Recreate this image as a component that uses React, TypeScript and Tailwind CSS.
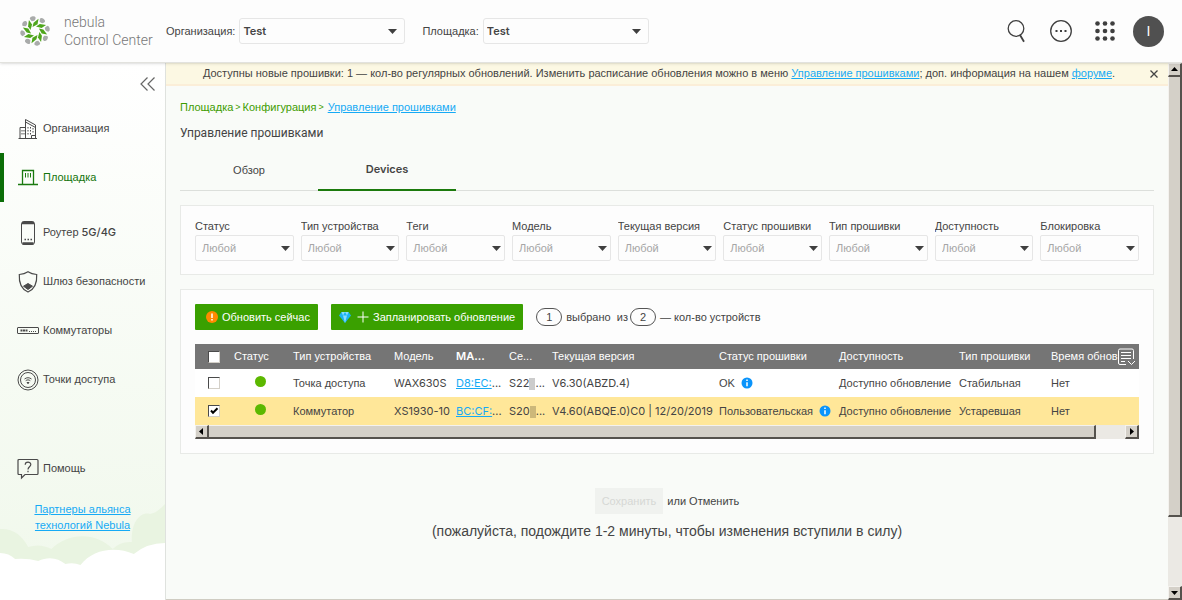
import { ReactNode, useState } from "react";

type FilterProps = {
  id: string;
  label: string;
};

type Device = {
  id: string;
  type: string;
  model: string;
  mac: string;
  serial: string;
  version: string;
  status: string;
  availability: string;
  firmware: string;
  time: string;
};

type NavItem = {
  label: ReactNode;
  icon: ReactNode;
  className: string;
};

const filters: FilterProps[] = [
  { id: "status", label: "Статус" },
  { id: "type", label: "Тип устройства" },
  { id: "tags", label: "Теги" },
  { id: "model", label: "Модель" },
  { id: "version", label: "Текущая версия" },
  { id: "fw-status", label: "Статус прошивки" },
  { id: "fw-type", label: "Тип прошивки" },
  { id: "availability", label: "Доступность" },
  { id: "lock", label: "Блокировка" },
];

const devices: Device[] = [
  {
    id: "wax",
    type: "Точка доступа",
    model: "WAX630S",
    mac: "D8:EC:",
    serial: "S22",
    version: "V6.30(ABZD.4)",
    status: "OK",
    availability: "Доступно обновление",
    firmware: "Стабильная",
    time: "Нет",
  },
  {
    id: "xs",
    type: "Коммутатор",
    model: "XS1930-10",
    mac: "BC:CF:",
    serial: "S20",
    version: "V4.60(ABQE.0)C0 | 12/20/2019",
    status: "Пользовательская",
    availability: "Доступно обновление",
    firmware: "Устаревшая",
    time: "Нет",
  },
];

function Logo() {
  return (
    <svg width="30" height="30" viewBox="-15 -15 30 30" aria-hidden="true">
      {[0, 45, 90, 135, 180, 225, 270, 315].map((a) => (
        <g key={a} transform={`rotate(${a + 8})`}>
          <path d="M-3 -3.500 L-2.600 -8 L1.800 -12.500 L1.600 -7 Z" fill="#4ea51b" />
          <path d="M3.300 -9.800 L3.200 -13 Q4.500 -14.500 7 -13.200 Q9 -12 8.600 -10.200 Q6.200 -7.600 3.300 -9.800 Z" fill="#a9abaa" />
        </g>
      ))}
    </svg>
  );
}

function OrgIcon() {
  return (
    <svg width="22" height="22" viewBox="0 0 22 22" fill="none" stroke="#4a4a4a" aria-hidden="true">
      <path d="M3 20.5V9.5H8.500M8.500 20.500V1.500L18.500 7V20.500ZM3 20.500H19M1.500 20.500H20" />
      <path d="M8.500 4L18.500 9.500" />
      <path d="M11 9V17M13.500 9V17M16 10V16M5 12V18M7 12V18" strokeDasharray="1.500 1.500" />
      <path d="M14.500 20.500V17.500H18.500" />
    </svg>
  );
}

function SiteIcon() {
  return (
    <svg width="22" height="22" viewBox="0 0 22 22" fill="none" stroke="#1a7a10" aria-hidden="true">
      <path d="M1 17.500H21M5.500 17.500V3.500H16.500V17.500" strokeWidth="1.300" />
      <path d="M8.500 6V10.500M11 6V10.500M13.500 6V10.500" />
    </svg>
  );
}

function RouterIcon() {
  return (
    <svg width="22" height="26" viewBox="0 0 22 26" fill="none" stroke="#4a4a4a" aria-hidden="true">
      <rect x="4.500" y="1.500" width="13" height="23" rx="2.500" />
      <path d="M5 3H17M5.500 23.500H16.500" strokeWidth="2.500" />
      <path d="M7.500 19.500H15" strokeWidth="1.500" strokeDasharray="1.500 1.500" />
    </svg>
  );
}

function ShieldIcon() {
  return (
    <svg width="22" height="22" viewBox="0 0 22 22" fill="none" stroke="#4a4a4a" aria-hidden="true">
      <path d="M11 0.800C13.500 2.500 16.500 3.300 19.700 3.500C20.200 12 18 18 11 21C4 18 1.800 12 2.300 3.500C5.500 3.300 8.500 2.500 11 0.800Z" strokeWidth="1.200" />
      <path d="M6.500 15.200L11 12.500L15.500 15.200L11 18.500Z" fill="#4a4a4a" />
    </svg>
  );
}

function SwitchIcon() {
  return (
    <svg width="22" height="22" viewBox="0 0 22 22" fill="none" stroke="#4a4a4a" aria-hidden="true">
      <rect x="0.500" y="7.500" width="21" height="6" rx="0.500" />
      <path d="M3.500 10.500H11" strokeWidth="2" strokeDasharray="2 0.500" />
      <path d="M12 11.500H19" strokeDasharray="1 1" />
    </svg>
  );
}

function ApIcon() {
  return (
    <svg width="22" height="22" viewBox="0 0 22 22" fill="none" stroke="#4a4a4a" aria-hidden="true">
      <circle cx="11" cy="11" r="10" />
      <circle cx="11" cy="11" r="7.500" />
      <path d="M7.500 10C9.500 8.300 12.500 8.300 14.500 10M8.700 11.700C10 10.600 12 10.600 13.300 11.700" />
      <path d="M10 13.500H12L11 14.700Z" fill="#4a4a4a" />
    </svg>
  );
}

function HelpIcon() {
  return (
    <svg width="22" height="22" viewBox="0 0 22 22" fill="none" stroke="#4a4a4a" aria-hidden="true">
      <path d="M2 1.500H20Q21 1.500 21 2.500V15.500Q21 16.500 20 16.500H8L4.500 20V16.500H2Q1 16.500 1 15.500V2.500Q1 1.500 2 1.500Z" strokeWidth="1.200" />
      <path d="M8.200 6.800C8.200 3.200 13.800 3.200 13.800 6.600C13.800 8.800 11 8.800 11 11.500M11 12.800V14.300" strokeWidth="1.200" />
    </svg>
  );
}

function InfoIcon() {
  return (
    <svg className="shrink-0" width="12" height="12" viewBox="0 0 12 12" aria-hidden="true">
      <circle cx="6" cy="6" r="5.500" fill="#0a94fb" />
      <path d="M6 5.200V9.300M6 2.600V4" stroke="#fff" strokeWidth="1.500" />
    </svg>
  );
}

function Caret() {
  return (
    <svg className="pointer-events-none absolute right-1 top-1/2 -mt-0.5" width="9" height="5" viewBox="0 0 9 5" aria-hidden="true">
      <path d="M0 0H9L4.500 5Z" fill="#3f3f3f" />
    </svg>
  );
}

function HeaderSelect({ id, label }: FilterProps) {
  return (
    <div className="flex items-center">
      <label htmlFor={id} className="mr-1">{label}</label>
      <div className="relative">
        <select id={id} className="block h-[26px] w-[166px] appearance-none rounded-[3px] border border-[#e6e6e6] bg-[#fdfdfd] pl-[3px] font-[Inter] font-semibold">
          <option>Test</option>
        </select>
        <span className="pointer-events-none absolute inset-y-0 right-1"><Caret /></span>
      </div>
    </div>
  );
}

function Filter({ id, label }: FilterProps) {
  return (
    <div className="min-w-0">
      <label htmlFor={id} className="block truncate leading-4">{label}</label>
      <div className="relative mt-px">
        <select id={id} className="block h-[26px] w-full appearance-none rounded-[2px] border border-[#e6e6e6] bg-[#fdfdfd] pl-1.5 text-[#a6a6a6]">
          <option>Любой</option>
        </select>
        <Caret />
      </div>
    </div>
  );
}

function Check(props: { label: string; checked: boolean; onChange: () => void }) {
  return (
    <span className="relative mx-auto block h-3 w-3">
      <input
        type="checkbox"
        aria-label={props.label}
        checked={props.checked}
        onChange={props.onChange}
        className="block h-3 w-3 appearance-none border border-b-[#d4d0c8] border-l-[#4a4a4a] border-r-[#d4d0c8] border-t-[#4a4a4a] bg-white"
      />
      {props.checked && (
        <svg className="pointer-events-none absolute inset-0" width="12" height="12" viewBox="0 0 12 12" aria-hidden="true">
          <path d="M3 5.500L5 7.800L9.500 3.300" fill="none" stroke="#000" strokeWidth="2" />
        </svg>
      )}
    </span>
  );
}

function ArrowButton(props: { label: string; path: string }) {
  return (
    <button aria-label={props.label} className="flex h-3.5 w-3.5 shrink-0 items-center justify-center border-b-2 border-r-2 border-t border-l border-b-[#55524d] border-l-[#f4f2ee] border-r-[#55524d] border-t-[#f4f2ee] bg-[#d4d0c8]">
      <svg width="7" height="7" viewBox="0 0 7 7" aria-hidden="true">
        <path d={props.path} fill="#000" />
      </svg>
    </button>
  );
}

const navItems: NavItem[] = [
  { label: "Организация", icon: <OrgIcon />, className: "" },
  { label: "Площадка", icon: <SiteIcon />, className: "border-l-4 !border-[#0b6e08] !pl-[13px] text-[#14740c]" },
  { label: <>Роутер <b className="font-[Inter] font-medium">5G/4G</b></>, icon: <RouterIcon />, className: "mt-1.5" },
  { label: "Шлюз безопасности", icon: <ShieldIcon />, className: "" },
  { label: "Коммутаторы", icon: <SwitchIcon />, className: "" },
  { label: "Точки доступа", icon: <ApIcon />, className: "" },
  { label: "Помощь", icon: <HelpIcon />, className: "mt-10" },
];

function Sidebar() {
  return (
    <aside className="relative flex w-[166px] shrink-0 flex-col border-r border-[#dfe2de] bg-gradient-to-b from-white to-[#f0f8eb]">
      <svg className="absolute bottom-0 left-0 w-full" height="100" viewBox="0 0 164 100" preserveAspectRatio="none" aria-hidden="true">
        <path d="M0 29C12 28 22 35 28 47Q40 43 51 49C68 32 96 32 112 49Q120 41 131 42C130 22 140 11 149 14Q156 13 164 4V100H0Z" fill="#e9f4e1" />
        <path d="M0 53Q9 53 15 59Q27 58 38 61C48 56 58 58 65 64Q73 62 80 65C92 49 115 46 133 54Q146 43 164 43V100H0Z" fill="#fff" />
      </svg>
      <div className="flex h-[41px] items-center justify-end pr-[9px]">
        <button aria-label="Свернуть">
          <svg width="16" height="16" viewBox="0 0 16 16" fill="none" stroke="#666" strokeWidth="1.200" aria-hidden="true">
            <path d="M7.500 1.500L1 8L7.500 14.500M14.500 1.500L8 8L14.500 14.500" />
          </svg>
        </button>
      </div>
      <nav>
        {navItems.map((item, i) => (
          <a key={i} href="#" className={`flex h-[49px] items-center gap-1 pl-[17px] ${item.className}`}>
            <span className="flex w-[22px] justify-center">{item.icon}</span>
            <span className="whitespace-nowrap">{item.label}</span>
          </a>
        ))}
      </nav>
      <a href="#" className="relative mx-auto mt-2 w-[110px] text-center leading-4 text-[#16aaf5] underline">
        Партнеры альянса технологий Nebula
      </a>
    </aside>
  );
}

function DeviceTable() {
  const [selected, setSelected] = useState<string[]>(["xs"]);

  const toggle = (id: string) => {
    setSelected(selected.includes(id) ? selected.filter((s) => s !== id) : [...selected, id]);
  };

  const allSelected = selected.length === devices.length;

  return (
    <div className="relative mt-3.5">
      <table className="w-full table-fixed border-collapse text-left">
        <colgroup>
          <col className="w-[37px]" />
          <col className="w-[59px]" />
          <col className="w-[101px]" />
          <col className="w-[62px]" />
          <col className="w-[53px]" />
          <col className="w-[43px]" />
          <col className="w-[167px]" />
          <col className="w-[120px]" />
          <col className="w-[120px]" />
          <col className="w-[92px]" />
          <col className="w-[90px]" />
        </colgroup>
        <thead>
          <tr className="h-[25px] whitespace-nowrap bg-[#757575] text-white [&>th]:p-0 [&>th+th]:pl-0.5 [&>th]:font-normal">
            <th>
              <Check label="Выбрать все" checked={allSelected} onChange={() => setSelected(allSelected ? [] : devices.map((d) => d.id))} />
            </th>
            <th>Статус</th>
            <th>Тип устройства</th>
            <th>Модель</th>
            <th className="font-[Inter] !font-semibold">MA...</th>
            <th>Се...</th>
            <th>Текущая версия</th>
            <th>Статус прошивки</th>
            <th>Доступность</th>
            <th>Тип прошивки</th>
            <th>Время обнов</th>
          </tr>
        </thead>
        <tbody>
          {devices.map((d) => (
            <tr key={d.id} className={`h-7 whitespace-nowrap [&>td]:p-0 [&>td+td]:pl-0.5 ${selected.includes(d.id) ? "bg-[#ffe799]" : "bg-white"}`}>
              <td><Check label={d.model} checked={selected.includes(d.id)} onChange={() => toggle(d.id)} /></td>
              <td><span className="mb-1 ml-[21px] block h-[11px] w-[11px] rounded-full bg-[#5cb800]" /></td>
              <td>{d.type}</td>
              <td className="font-[Inter]">{d.model}</td>
              <td className="font-[Inter]"><a href="#" className="text-[#16aaf5] underline">{d.mac}</a>...</td>
              <td className="font-[Inter]">{d.serial}<span className="inline-block h-3 w-1.5 bg-black/20 align-middle" />...</td>
              <td className="font-[Inter]">{d.version}</td>
              <td><span className="flex items-center gap-1.5">{d.status}<InfoIcon /></span></td>
              <td>{d.availability}</td>
              <td>{d.firmware}</td>
              <td>{d.time}</td>
            </tr>
          ))}
        </tbody>
      </table>
      <button aria-label="Столбцы" className="absolute right-1 top-1">
        <svg width="18" height="18" viewBox="0 0 18 18" fill="none" stroke="#fff" aria-hidden="true">
          <path d="M9 16.500H3Q1.500 16.500 1.500 15V2.500Q1.500 1 3 1H15Q16.500 1 16.500 2.500V11" />
          <path d="M4 4.500H14M4 7.500H14M4 10.500H14M4 13.500H8M11 13L14.500 16.500L18 13" />
        </svg>
      </button>
      <div className="flex h-3.5 bg-[#ebe9e4]">
        <ArrowButton label="Влево" path="M5 0V7L1 3.500Z" />
        <div className="w-[94%] border-b-2 border-r-2 border-t border-b-[#55524d] border-r-[#55524d] border-t-[#f4f2ee] bg-[#d4d0c8]" />
        <div className="flex-1" />
        <ArrowButton label="Вправо" path="M2 0V7L6 3.500Z" />
      </div>
    </div>
  );
}

function App() {
  return (
    <div className="flex h-screen flex-col overflow-hidden font-['Liberation_Sans',sans-serif] text-[11px] text-[#444]">
      <header className="relative z-10 flex h-[63px] shrink-0 items-center border-b border-[#e2e2de] bg-[#fdfdfd] shadow-sm">
        <a href="#" className="flex w-[166px] items-center gap-3.5 pl-5">
          <Logo />
          <span className="whitespace-nowrap font-[Roboto] text-sm leading-[18px] font-light text-[#777]">nebula<br />Control Center</span>
        </a>
        <div className="flex gap-[17px]">
          <HeaderSelect id="org" label="Организация:" />
          <HeaderSelect id="site" label="Площадка:" />
        </div>
        <div className="ml-auto flex items-center gap-5 pr-[18px]">
          <button aria-label="Поиск">
            <svg width="24" height="24" viewBox="0 0 24 24" fill="none" stroke="#3f3f3f" strokeWidth="1.300" aria-hidden="true">
              <circle cx="11" cy="9.500" r="7.800" />
              <path d="M15 16L19 22.800" strokeWidth="1.800" />
            </svg>
          </button>
          <button aria-label="Сообщения">
            <svg width="24" height="24" viewBox="0 0 24 24" fill="none" stroke="#3f3f3f" strokeWidth="1.300" aria-hidden="true">
              <circle cx="12" cy="12" r="10.300" />
              <path d="M6.500 12H8.500M11 12H13M15.500 12H17.500" strokeWidth="1.800" />
            </svg>
          </button>
          <button aria-label="Приложения">
            <svg width="24" height="24" viewBox="0 0 24 24" fill="#3f3f3f" aria-hidden="true">
              {[4.5, 12, 19.5].map((y) => [4.5, 12, 19.5].map((x) => <circle key={`${x}-${y}`} cx={x} cy={y} r="2.300" />))}
            </svg>
          </button>
          <button className="-ml-1 flex h-[31px] w-[31px] items-center justify-center rounded-full bg-[#505050] text-sm text-white">I</button>
        </div>
      </header>

      <div className="flex min-h-0 flex-1">
        <Sidebar />
        <main className="min-w-0 flex-1 border-b border-[#cfccc2] bg-[#f9fbf8]">
          <div className="flex h-[23px] items-center border-b-2 border-[#fbeed8] bg-[#fcf8e3] px-3">
            <p className="flex-1 pr-2.5 text-center">
              Доступны новые прошивки: 1 — кол-во регулярных обновлений. Изменить расписание обновления можно в меню{" "}
              <a href="#" className="text-[#16aaf5] underline">Управление прошивками</a>; доп. информация на нашем{" "}
              <a href="#" className="text-[#16aaf5] underline">форуме</a>.
            </p>
            <button aria-label="Закрыть" className="-mr-0.5">
              <svg width="8" height="8" viewBox="0 0 8 8" stroke="#444" strokeWidth="1.300" aria-hidden="true">
                <path d="M0.500 0.500L7.500 7.500M7.500 0.500L0.500 7.500" />
              </svg>
            </button>
          </div>

          <div className="px-3.5 pt-[13px]">
            <div className="flex items-center gap-0.5 leading-4 text-[#3d9c00]">
              <a href="#">Площадка</a>
              <span className="text-[9px]">&gt;</span>
              <a href="#">Конфигурация</a>
              <span className="text-[9px]">&gt;</span>
              <a href="#" className="ml-0.5 text-[#16aaf5] underline">Управление прошивками</a>
            </div>
            <h1 className="mt-2 font-[Roboto] text-xs leading-5">Управление прошивками</h1>

            <div role="tablist" className="mt-[7px] flex h-[41px] border-b border-[#dcdfdb]">
              <button role="tab" aria-selected="false" className="w-[138px]">Обзор</button>
              <button role="tab" aria-selected="true" className="-mb-px w-[138px] border-b-2 border-[#1c7a0c] font-[Inter] font-semibold">Devices</button>
            </div>

            <section className="mt-3.5 grid grid-cols-9 gap-[7px] border border-[#e8eae7] bg-[#fdfdfd] px-3.5 pt-3 pb-[13px]">
              {filters.map((f) => <Filter key={f.id} id={f.id} label={f.label} />)}
            </section>

            <section className="mt-3.5 border border-[#e8eae7] bg-[#fdfdfd] p-3.5">
              <div className="flex items-center">
                <button className="flex h-[26px] items-center gap-1 rounded-[1px] bg-[#3aa000] pl-[11px] pr-2 text-white">
                  <svg width="12" height="12" viewBox="0 0 12 12" aria-hidden="true">
                    <circle cx="6" cy="6" r="6" fill="#ff8a00" />
                    <path d="M6 2.500V7M6 8V9.500" stroke="#fff" strokeWidth="1.500" />
                  </svg>
                  Обновить сейчас
                </button>
                <button className="ml-[13px] flex h-[26px] items-center rounded-[1px] bg-[#3aa000] px-2 text-white">
                  <svg width="12" height="11" viewBox="0 0 12 11" aria-hidden="true">
                    <path d="M2.500 0H9.500L12 3.500L6 11L0 3.500Z" fill="#1bb4f2" />
                    <path d="M2.500 0L4 3.500L6 0L8 3.500L9.500 0ZM4 3.500H8L6 11Z" fill="#8adcff" />
                  </svg>
                  <svg className="mr-1 ml-1.5" width="12" height="12" viewBox="0 0 12 12" stroke="#fff" aria-hidden="true">
                    <path d="M6 0.500V11.500M0.500 6H11.500" />
                  </svg>
                  Запланировать обновление
                </button>
                <span className="ml-[13px] h-[18px] w-[26px] rounded-full border border-[#555] text-center leading-4">1</span>
                <span className="ml-1 mr-0.5">выбрано&nbsp; из</span>
                <span className="h-[18px] w-[26px] rounded-full border border-[#555] text-center leading-4">2</span>
                <span className="ml-1">— кол-во устройств</span>
              </div>
              <DeviceTable />
            </section>

            <div className="mt-[34px] flex items-center justify-center gap-1">
              <button disabled className="h-[26px] bg-[#f0f2ef] px-[7px] text-[#d6d8d5]">Сохранить</button>
              <span>или <a href="#">Отменить</a></span>
            </div>
            <p className="mt-[7px] text-center text-sm leading-5">(пожалуйста, подождите 1-2 минуты, чтобы изменения вступили в силу)</p>
          </div>
        </main>

        <div className="flex w-3.5 shrink-0 flex-col bg-[#ebe9e4]">
          <ArrowButton label="Вверх" path="M0 5H7L3.500 1Z" />
          <div className="h-[82%] border-b-2 border-l border-r-2 border-b-[#55524d] border-l-[#f4f2ee] border-r-[#55524d] bg-[#d4d0c8]" />
          <div className="flex-1" />
          <ArrowButton label="Вниз" path="M0 2H7L3.500 6Z" />
        </div>
      </div>
    </div>
  );
}

export default App;
